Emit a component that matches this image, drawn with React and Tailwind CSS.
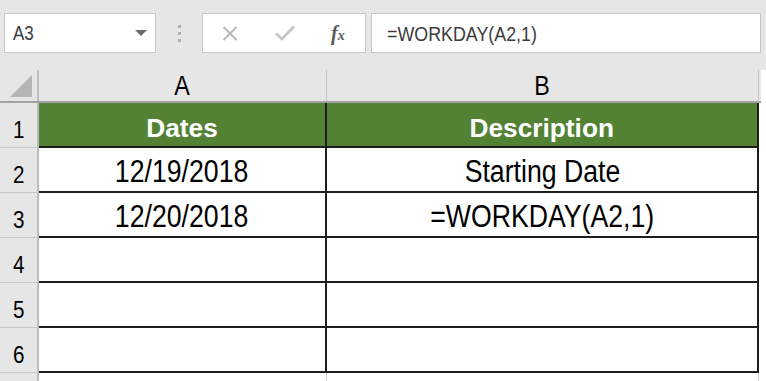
const font = { fontFamily: '"Liberation Sans", Arial, sans-serif' };

const rows = [
  { n: "1", a: "Dates", b: "Description", head: true },
  { n: "2", a: "12/19/2018", b: "Starting Date" },
  { n: "3", a: "12/20/2018", b: "=WORKDAY(A2,1)" },
  { n: "4", a: "", b: "" },
  { n: "5", a: "", b: "" },
  { n: "6", a: "", b: "" },
];

function CellText({ children, head }) {
  if (head) {
    return (
      <span className="block text-[25px] leading-none font-bold text-white scale-x-[1.05]">
        {children}
      </span>
    );
  }
  return (
    <span className="block text-[31px] leading-none text-black scale-x-[0.86] whitespace-nowrap">
      {children}
    </span>
  );
}

function Toolbar() {
  return (
    <div className="h-[70px] bg-[#e6e6e6] flex items-start pt-[13px] pl-[4px]">
      <div className="w-[152px] h-[40px] bg-white border border-[#c6c6c6] flex items-center justify-between pl-[8px] pr-[8px]">
        <span className="block text-[20px] leading-none text-[#3c3c3c] scale-x-[0.85] origin-left">A3</span>
        <svg width="12" height="6" viewBox="0 0 12 6">
          <path d="M0 0 L12 0 L6 6 Z" fill="#6a6a6a" />
        </svg>
      </div>
      <div className="w-[46px] h-[40px] flex flex-col items-center justify-center gap-[4px]">
        <div className="w-[3px] h-[3px] bg-[#b0b0b0]" />
        <div className="w-[3px] h-[3px] bg-[#b0b0b0]" />
        <div className="w-[3px] h-[3px] bg-[#b0b0b0]" />
      </div>
      <div className="w-[164px] h-[40px] bg-white border border-[#c6c6c6] flex items-center pl-[19px]">
        <svg width="16" height="15" viewBox="0 0 16 15">
          <path d="M1.5 1 L14.5 14 M14.5 1 L1.5 14" stroke="#b9b9b9" strokeWidth="2" fill="none" />
        </svg>
        <svg className="ml-[37px]" width="20" height="16" viewBox="0 0 20 16">
          <path d="M1 8.5 L7 14 L19 1.5" stroke="#c3c3c3" strokeWidth="2.6" fill="none" />
        </svg>
        <span
          className="ml-[36px] text-[20px] leading-none text-[#5a5a5a] italic font-bold"
          style={{ fontFamily: '"Liberation Serif", "Times New Roman", serif' }}
        >
          f<span className="text-[14px]">x</span>
        </span>
      </div>
      <div className="ml-[5px] w-[390px] h-[40px] bg-white border border-[#c6c6c6] flex items-center pl-[15px]">
        <span className="block text-[21px] leading-none text-[#3c3c3c] scale-x-[0.85] origin-left whitespace-nowrap">
          =WORKDAY(A2,1)
        </span>
      </div>
    </div>
  );
}

export default function App() {
  return (
    <div className="w-[766px] h-[381px] overflow-hidden bg-white" style={font}>
      <Toolbar />
      <div className="w-[761px] flex flex-col">
        <div className="flex h-[33px] bg-[#e6e6e6] border-b-2 border-[#a3a3a3]">
          <div className="w-[39px] border-r-2 border-[#bdbdbd] flex items-end justify-end pr-[5px] pb-[4px]">
            <svg width="22" height="22" viewBox="0 0 22 22">
              <path d="M22 0 L22 22 L0 22 Z" fill="#b5b5b5" />
            </svg>
          </div>
          <div className="w-[288px] border-r border-[#c4c4c4] flex items-end justify-center pb-[1px]">
            <span className="block text-[27px] leading-none text-black scale-x-[0.86]">A</span>
          </div>
          <div className="w-[432px] border-r border-[#c4c4c4] flex items-end justify-center pb-[1px]">
            <span className="block text-[27px] leading-none text-black scale-x-[0.86]">B</span>
          </div>
        </div>
        {rows.map((r) => (
          <div key={r.n} className="flex h-[45px]">
            <div className="w-[39px] bg-[#e6e6e6] border-r-2 border-b border-r-[#bdbdbd] border-b-[#c8c8c8] flex items-end justify-center pb-[5px]">
              <span className="block text-[24px] leading-none text-black scale-x-[0.86]">{r.n}</span>
            </div>
            <div
              className={`w-[288px] border-r-2 border-b-2 border-[#1e1e1e] flex items-end justify-center ${
                r.head ? "bg-[#538234] pb-[5px]" : "bg-white pb-[4px]"
              }`}
            >
              {r.a && <CellText head={r.head}>{r.a}</CellText>}
            </div>
            <div
              className={`w-[432px] border-r-2 border-b-2 border-[#1e1e1e] flex items-end justify-center ${
                r.head ? "bg-[#538234] pb-[5px]" : "bg-white pb-[4px]"
              }`}
            >
              {r.b && <CellText head={r.head}>{r.b}</CellText>}
            </div>
          </div>
        ))}
        <div className="flex h-[20px]">
          <div className="w-[39px] bg-[#e6e6e6] border-r-2 border-[#bdbdbd]" />
          <div className="w-[288px] border-r border-[#d4d4d4]" />
          <div className="w-[432px] border-r border-[#d4d4d4]" />
        </div>
      </div>
    </div>
  );
}
